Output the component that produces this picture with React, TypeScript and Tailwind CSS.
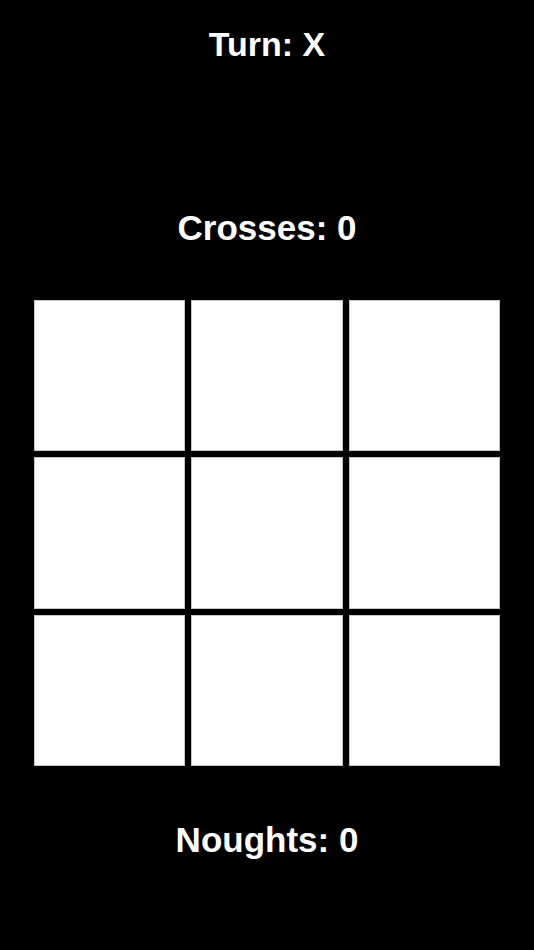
const cells = Array.from({ length: 9 }, (_, i) => i)

export default function App() {
  return (
    <div
      className="w-[534px] h-[950px] bg-black text-white flex flex-col items-center pt-[24px]"
      style={{ fontFamily: '"Liberation Sans", Arial, sans-serif' }}
    >
      <div className="h-10 leading-10 text-[34px] font-bold">Turn: X</div>
      <div className="mt-[144px] h-10 leading-10 text-[35px] font-bold">Crosses: 0</div>
      <div className="mt-[52px] w-[466px] grid grid-cols-3 gap-[6px]">
        {cells.map((i) => (
          <button key={i} className="aspect-square bg-white border border-[#c4c4c4]" />
        ))}
      </div>
      <div className="mt-[54px] h-10 leading-10 text-[35px] font-bold">Noughts: 0</div>
    </div>
  )
}
